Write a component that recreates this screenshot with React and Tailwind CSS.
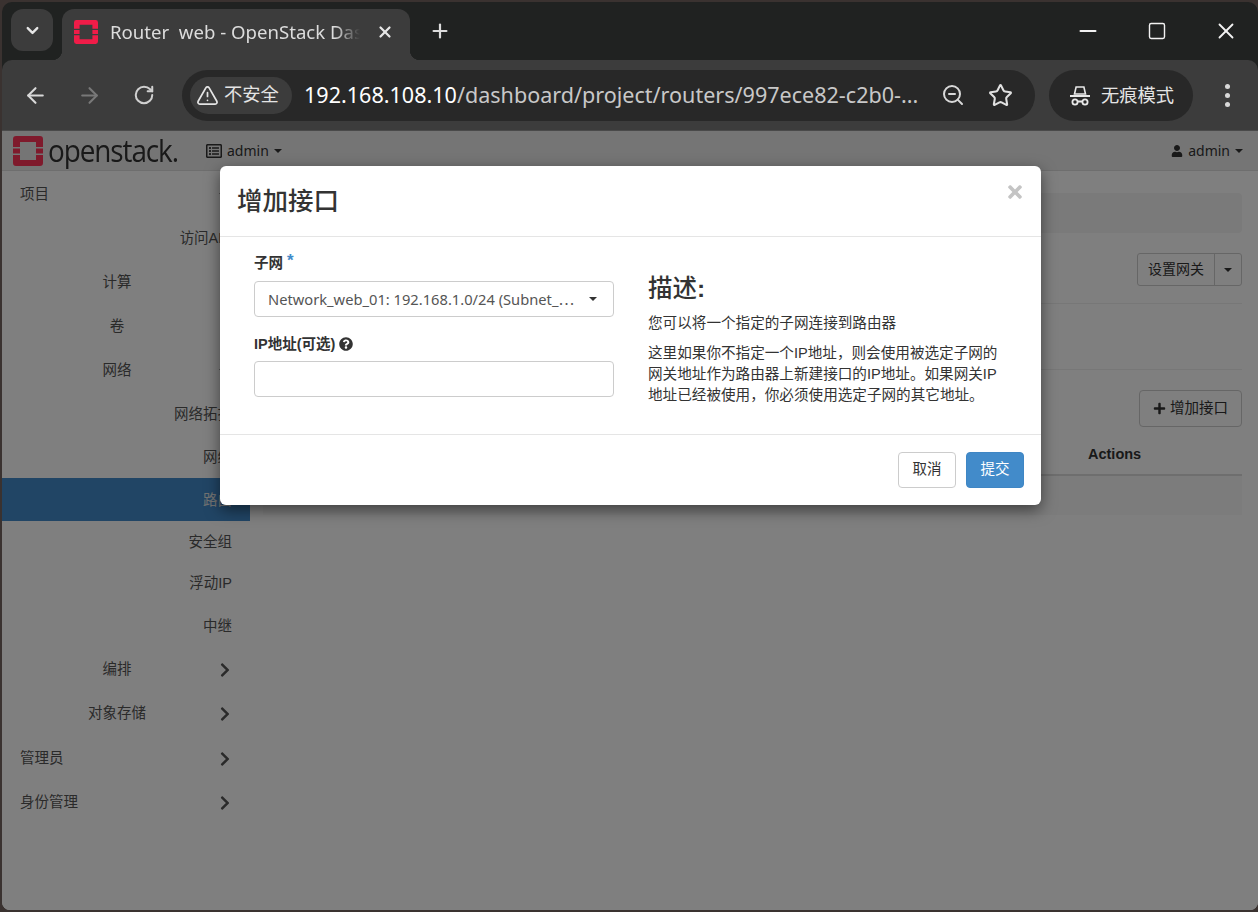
import React from 'react';
import { ChevronDown, X, Plus, ArrowLeft, ArrowRight, RotateCw, TriangleAlert, ZoomOut, Star, Minus, Square } from 'lucide-react';
import { FaChevronRight, FaUser, FaPlus, FaQuestionCircle, FaTimes, FaRegListAlt } from 'react-icons/fa';

const cjk = '"Liberation Sans", "Noto Sans CJK SC", sans-serif';

const Caret = ({ className = '' }) => (
  <span className={`inline-block w-0 h-0 border-x-[4.5px] border-x-transparent border-t-[4.5px] border-t-current ${className}`} />
);

const StackLogo = ({ size, color }) => (
  <svg width={size} height={size} viewBox="0 0 30 30">
    <path fill={color} fillRule="evenodd" d="M3 0h24a3 3 0 0 1 3 3v8h-7V6H7v5H0V3a3 3 0 0 1 3-3zM0 12.5h7v5H0zM23 12.5h7v5H23zM0 19h7v5h16v-5h7v8a3 3 0 0 1-3 3H3a3 3 0 0 1-3-3z" />
  </svg>
);

const Incognito = () => (
  <svg width="24" height="22" viewBox="0 0 24 22" fill="none" stroke="#e8e8e8" strokeWidth="1.8">
    <path d="M6.5 9l1.6-7h7.8l1.6 7z" stroke="#e8e8e8" strokeWidth="1.6" />
    <path d="M2 11h20" />
    <circle cx="7" cy="17" r="2.6" />
    <circle cx="17" cy="17" r="2.6" />
    <path d="M9.6 16.5h4.8" />
  </svg>
);

// row heights are tuned by hand, the dashboard's rows are not all equal
const navItems = [
  { label: '项目', kind: 'top', open: true, h: 'h-[44px]' },
  { label: '访问API', kind: 'sub', h: 'h-[44px]' },
  { label: '计算', kind: 'mid', h: 'h-[44px]' },
  { label: '卷', kind: 'mid', h: 'h-[44.5px]' },
  { label: '网络', kind: 'mid', open: true, h: 'h-[44px]' },
  { label: '网络拓扑', kind: 'sub', h: 'h-[43.5px]' },
  { label: '网络', kind: 'sub', h: 'h-[43px]' },
  { label: '路由', kind: 'sub', active: true, h: 'h-[43px]' },
  { label: '安全组', kind: 'sub', h: 'h-[40px]' },
  { label: '浮动IP', kind: 'sub', h: 'h-[42.5px]' },
  { label: '中继', kind: 'sub', h: 'h-[43px]' },
  { label: '编排', kind: 'mid', arrow: true, h: 'h-[43.5px]' },
  { label: '对象存储', kind: 'mid', arrow: true, h: 'h-[45px]' },
  { label: '管理员', kind: 'top', arrow: true, h: 'h-[44px]' },
  { label: '身份管理', kind: 'top', arrow: true, h: 'h-[44px]' },
];

const NavRow = ({ item }) => {
  const align = item.kind === 'top' ? 'pl-[18px] text-left' : item.kind === 'sub' ? 'text-right' : 'text-center';
  return (
    <div className={`${item.h} relative flex items-center pt-[3px] pr-[18px] text-[14.5px] ${item.active ? 'bg-[#428bca] text-[#e4e4e4]' : 'text-[#555]'}`}>
      <span className={`w-full whitespace-nowrap ${align}`}>{item.label}</span>
      {item.arrow && <FaChevronRight className="absolute left-[215px] text-[16px] text-[#555]" />}
      {item.open && <Caret className="absolute left-[217px] text-[#555]" />}
    </div>
  );
};

export default function App() {
  return (
    <div className="w-[1258px] h-[912px] overflow-hidden bg-[#3a3230] pt-[2px] pl-[2px]" style={{ fontFamily: cjk }}>
      <div className="w-[1256px] h-[908px] rounded-t-[10px] rounded-b-[8px] overflow-hidden flex flex-col bg-[#202221]">
        {/* tab strip */}
        <div className="h-[58px] flex items-end pl-[9px] pr-[19px] shrink-0">
          <div className="h-[42px] w-[42px] mb-[9px] rounded-[12px] bg-[#3c3c3c] flex items-center justify-center shrink-0">
            <ChevronDown size={19} strokeWidth={3} color="#e6e6e6" />
          </div>
          <div className="relative ml-[9px] h-[51px] w-[348px] rounded-t-[12px] bg-[#3c3c3c] flex items-center pl-[12px] pb-[5px] text-[#dcdcdc] shrink-0">
            <span className="absolute -left-[10px] bottom-0 w-[10px] h-[10px] bg-[radial-gradient(circle_at_0_0,transparent_10px,#3c3c3c_10.5px)]" />
            <span className="absolute -right-[10px] bottom-0 w-[10px] h-[10px] bg-[radial-gradient(circle_at_100%_0,transparent_10px,#3c3c3c_10.5px)]" />
            <StackLogo size={24} color="#f01c48" />
            <span className="ml-[12px] w-[250px] overflow-hidden whitespace-nowrap text-[18.6px] [mask-image:linear-gradient(to_right,black_90%,transparent)]" style={{ fontFamily: '"Noto Sans", sans-serif' }}>Router&nbsp; web - OpenStack Dashboard</span>
            <X size={18} strokeWidth={3} color="#e6e6e6" className="ml-[16px]" />
          </div>
          <Plus size={22} strokeWidth={2.4} color="#dcdcdc" className="ml-[19px] mb-[18px]" />
          <div className="ml-auto flex items-center mb-[16px] text-[#f2f2f2]">
            <Minus size={26} strokeWidth={1.7} />
            <Square size={20} strokeWidth={1.7} className="ml-[46px]" />
            <X size={26} strokeWidth={1.7} className="ml-[46px]" />
          </div>
        </div>

        {/* toolbar */}
        <div className="h-[71px] bg-[#3c3c3c] rounded-t-[10px] border-b border-[#4a4a4a] flex items-center pl-[21px] pr-[19px] shrink-0">
          <ArrowLeft size={25} strokeWidth={2} color="#d8d8d8" />
          <ArrowRight size={25} strokeWidth={2} color="#787878" className="ml-[29px]" />
          <RotateCw size={22} strokeWidth={2.2} color="#d0d0d0" className="ml-[31px]" />
          <div className="ml-[27px] h-[51px] w-[853px] rounded-full bg-[#282828] flex items-center pl-[8px] pr-[22px] shrink-0">
            <div className="h-[37px] w-[102px] rounded-full bg-[#3c3c3c] flex items-center pl-[6px] gap-[5px] text-[18.3px] text-[#e4e4e4] shrink-0">
              <TriangleAlert size={23} strokeWidth={1.8} />
              <span>不安全</span>
            </div>
            <span className="ml-[12px] w-[620px] whitespace-nowrap overflow-hidden text-[21.55px] text-[#c8c8c8]" style={{ fontFamily: '"Noto Sans", sans-serif' }}>
              <span className="text-white">192.168.108.10</span>/dashboard/project/routers/997ece82-c2b0-...
            </span>
            <ZoomOut size={24} strokeWidth={2} color="#d8d8d8" className="ml-auto" />
            <Star size={25} strokeWidth={2} color="#e0e0e0" className="ml-[23px]" />
          </div>
          <div className="ml-[14px] pt-[1px] h-[51px] w-[144px] rounded-full bg-[#282828] flex items-center justify-center gap-[9px] text-[18.3px] text-[#e4e4e4] shrink-0">
            <Incognito />
            <span>无痕模式</span>
          </div>
          <div className="ml-auto flex flex-col gap-[4px] mr-[9px]">
            <span className="w-[5px] h-[5px] rounded-full bg-[#d8d8d8]" />
            <span className="w-[5px] h-[5px] rounded-full bg-[#d8d8d8]" />
            <span className="w-[5px] h-[5px] rounded-full bg-[#d8d8d8]" />
          </div>
        </div>

        {/* dashboard page */}
        <div className="relative flex-1 bg-white overflow-hidden text-[#333]">
          <div className="h-[40px] bg-[#ebebeb] border-b border-[#dcdcdc] flex items-center pl-[11px] pr-[15px]">
            <StackLogo size={30} color="#ff3458" />
            <span className="ml-[5px] text-[31px] leading-none text-[#333] tracking-[-1.2px] scale-x-[0.9] origin-left w-[139px] whitespace-nowrap" style={{ fontFamily: '"Open Sans", sans-serif' }}>openstack.</span>
            <FaRegListAlt className="ml-[19px] text-[16px] text-[#333]" />
            <span className="ml-[5px] text-[14px]" style={{ fontFamily: '"Noto Sans", sans-serif' }}>admin</span>
            <Caret className="ml-[5px]" />
            <FaUser className="ml-auto text-[12px]" />
            <span className="ml-[5px] text-[14px]" style={{ fontFamily: '"Noto Sans", sans-serif' }}>admin</span>
            <Caret className="ml-[5px]" />
          </div>

          <div className="flex">
            <aside className="w-[248px] shrink-0">
              {navItems.map((item, i) => <NavRow key={i} item={item} />)}
            </aside>
            <main className="flex-1 pl-[13px] pr-[16px] pt-[22px]">
              <div className="h-[40px] rounded-[4px] bg-[#f5f5f5]" />
              <div className="flex justify-end mt-[20px]">
                <div className="h-[33px] flex rounded-[3px] border border-[#ccc] text-[14px] text-[#333]">
                  <span className="w-[77px] flex items-center justify-center border-r border-[#ccc]">设置网关</span>
                  <span className="w-[26px] flex items-center justify-center"><Caret /></span>
                </div>
              </div>
              <div className="h-px bg-[#eee] mt-[17px]" />
              <div className="h-px bg-[#eee] mt-[65px]" />
              <div className="flex justify-end mt-[20px]">
                <div className="h-[37px] w-[103px] rounded-[4px] border border-[#ccc] flex items-center justify-center gap-[4px] text-[14.5px]">
                  <FaPlus className="text-[13px]" />
                  <span>增加接口</span>
                </div>
              </div>
              <div className="h-[49px] border-b-2 border-[#ddd] flex items-end pb-[8px]">
                <span className="ml-[825px] font-bold text-[14.5px]">Actions</span>
              </div>
              <div className="h-[39px] bg-[#f9f9f9]" />
            </main>
          </div>

          <div className="absolute inset-0 bg-black/50" />

          {/* modal */}
          <div className="absolute left-[218px] top-[35px] w-[821px] h-[339px] bg-white rounded-[6px] shadow-[0_5px_15px_rgba(0,0,0,0.5)] flex flex-col">
            <div className="h-[71px] border-b border-[#e5e5e5] flex items-center pl-[17px] pr-[16px] shrink-0">
              <h4 className="text-[25.5px] text-[#333] font-medium">增加接口</h4>
              <FaTimes className="ml-auto mb-[19px] text-[#c4c4c4] text-[20px]" />
            </div>
            <div className="h-[197px] flex pl-[34px] shrink-0">
              <div className="w-[360px] pt-[16px]">
                <div className="text-[14.5px] font-bold text-[#333] h-[28px] flex items-start">
                  子网<span className="ml-[4px] -mt-[5px] text-[17px] text-[#428bca]">*</span>
                </div>
                <div className="h-[36px] rounded-[4px] border border-[#ccc] flex items-center pl-[13px] pr-[16px] text-[14.7px] text-[#555]" style={{ fontFamily: '"Noto Sans", "Noto Sans CJK SC", sans-serif' }}>
                  <span className="whitespace-nowrap">Network_web_01: 192.168.1.0/24 (Subnet_⋯</span>
                  <Caret className="ml-auto text-[#333]" />
                </div>
                <div className="mt-[17px] text-[14.5px] font-bold text-[#333] h-[27px] flex items-start">
                  IP地址(可选)
                  <FaQuestionCircle className="ml-[4px] mt-[3px] text-[14px]" />
                </div>
                <div className="h-[36px] rounded-[4px] border border-[#ccc]" />
              </div>
              <div className="ml-[34px] w-[352px] pt-[34px] text-[#333]">
                <h3 className="text-[24.5px] leading-[36px] font-medium">描述<span className="font-bold">:</span></h3>
                <p className="mt-[6px] text-[14.6px] leading-[21px]">您可以将一个指定的子网连接到路由器</p>
                <p className="mt-[9px] text-[14.6px] leading-[21px]">这里如果你不指定一个IP地址，则会使用被选定子网的网关地址作为路由器上新建接口的IP地址。如果网关IP地址已经被使用，你必须使用选定子网的其它地址。</p>
              </div>
            </div>
            <div className="flex-1 border-t border-[#e5e5e5] flex justify-end items-start gap-[10px] pt-[17px] pr-[17px]">
              <button className="h-[36px] w-[58px] rounded-[4px] border border-[#ccc] bg-white text-[14.5px] text-[#333]">取消</button>
              <button className="h-[36px] w-[58px] rounded-[4px] border border-[#3f86c4] bg-[#428bca] text-[14.5px] text-white">提交</button>
            </div>
          </div>
        </div>
      </div>
    </div>
  );
}
